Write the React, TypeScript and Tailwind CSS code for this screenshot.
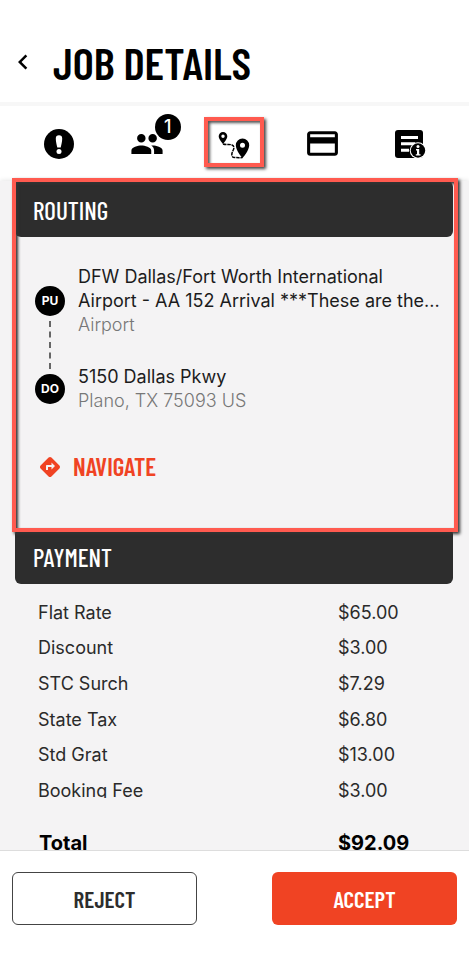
import type { ReactNode } from "react";
import { MdChevronLeft, MdCreditCard, MdDirections, MdPeople } from "react-icons/md";

const condensed =
  "font-['Barlow_Condensed','Roboto_Condensed','Liberation_Sans_Narrow','Liberation_Sans',sans-serif]";

const charges = [
  ["Flat Rate", "$65.00"],
  ["Discount", "$3.00"],
  ["STC Surch", "$7.29"],
  ["State Tax", "$6.80"],
  ["Std Grat", "$13.00"],
  ["Booking Fee", "$3.00"],
];

function AlertIcon() {
  return (
    <svg viewBox="0 0 30 30" className="size-[30px]" aria-hidden="true">
      <circle cx="15" cy="15" r="15" />
      <path d="M11.800 9.500a3.200 3.200 0 0 1 6.400 0c0 3-.8 6-1.500 9h-3.400c-.7-3-1.500-6-1.500-9z" fill="#fff" />
      <circle cx="15" cy="22.600" r="2.500" fill="#fff" />
    </svg>
  );
}

function RouteIcon() {
  return (
    <svg viewBox="0 0 32 28" className="h-7 w-8" aria-hidden="true">
      <path
        fillRule="evenodd"
        d="M5 0a4.300 4.300 0 0 0-4.300 4.300C.7 7.500 5 12 5 12s4.300-4.500 4.300-7.700A4.300 4.300 0 0 0 5 0zm0 2.600a1.700 1.700 0 1 1 0 3.400 1.700 1.700 0 0 1 0-3.400z"
      />
      <path
        fillRule="evenodd"
        d="M24.500 6.500A6.700 6.700 0 0 0 17.800 13.200C17.800 18.500 24.500 26 24.500 26s6.700-7.500 6.700-12.800A6.700 6.700 0 0 0 24.500 6.500zm0 4.200a2.500 2.500 0 1 1 0 5 2.500 2.500 0 0 1 0-5z"
      />
      <path
        d="M5 12c3 1 6 0 8.500.8 3.500 1.200 2.500 4 1.300 6.200-1.500 3-1.600 6.500 2 6.500 2.700.2 5 .3 7.700 0"
        fill="none"
        stroke="#000"
        strokeWidth="1.500"
        strokeDasharray="3.500 .8"
      />
    </svg>
  );
}

function NotesIcon() {
  return (
    <svg viewBox="0 0 32 30" className="h-[30px] w-8" aria-hidden="true">
      <rect x="1" y="1" width="28" height="28" rx="3" />
      <path d="M7 8.500h17M7 14.800h14M7 21.300h8" stroke="#fff" strokeWidth="3" />
      <circle cx="24" cy="21.500" r="8.300" fill="#fff" />
      <circle cx="24" cy="21.500" r="7.200" />
      <circle cx="24" cy="17.500" r="1.500" fill="#fff" />
      <path d="M22 20h3.200v5.200h1.300v1.400h-4.700v-1.400h1.200v-3.800h-1z" fill="#fff" />
    </svg>
  );
}

function Tab({ label, children }: { label: string; children: ReactNode }) {
  return (
    <button type="button" aria-label={label} className="flex items-center justify-center">
      {children}
    </button>
  );
}

function SectionTitle({ children }: { children: ReactNode }) {
  return (
    <h2
      className={`${condensed} flex h-14 items-center rounded-md bg-[#2d2d2d] px-[18px] pt-1 text-[25px] font-medium text-white`}
    >
      {children}
    </h2>
  );
}

function Stop({ code, children }: { code: string; children: ReactNode }) {
  return (
    <li className="flex items-center gap-[13px]">
      <span className="z-10 flex size-[30px] shrink-0 items-center justify-center rounded-full bg-black text-xs font-bold text-white">
        {code}
      </span>
      <div className="min-w-0 flex-1 text-lg leading-6 text-[#1c1c1c]">{children}</div>
    </li>
  );
}

export default function App() {
  return (
    <div className="flex h-screen flex-col overflow-hidden bg-white font-['Inter',sans-serif] text-black">
      <header className="flex h-[106px] shrink-0 items-center border-b-4 border-[#f7f7f7] px-2 pt-[22px]">
        <button type="button" aria-label="Back">
          <MdChevronLeft className="size-[30px]" />
        </button>
        <h1 className={`${condensed} ml-[15px] text-[45px] leading-none font-semibold`}>
          JOB DETAILS
        </h1>
      </header>

      <nav className="grid h-[75px] shrink-0 grid-cols-5 px-[15px]">
        <Tab label="Alerts">
          <AlertIcon />
        </Tab>
        <Tab label="Passengers">
          <span className="relative">
            <MdPeople className="size-[34px]" />
            <span className="absolute -top-[13px] -right-[17px] flex size-[26px] items-center justify-center rounded-full bg-black text-lg font-medium text-white">
              1
            </span>
          </span>
        </Tab>
        <Tab label="Routing">
          <span className="mb-1 flex h-[50px] w-[60px] items-center justify-center border-4 border-[#ff5a4f] pt-2 shadow-[2px_2px_3px_#444,inset_2px_2px_3px_#555]">
            <RouteIcon />
          </span>
        </Tab>
        <Tab label="Payment">
          <MdCreditCard className="size-[37px]" />
        </Tab>
        <Tab label="Notes">
          <NotesIcon />
        </Tab>
      </nav>

      <main className="min-h-0 flex-1 bg-[#f4f3f4] pr-4 pl-[15px] shadow-[0_0_5px_#ddd]">
        <section className="relative h-[347px]">
          <SectionTitle>ROUTING</SectionTitle>
          <div className="pt-7 pr-2 pl-5">
            <div className="relative">
              <div className="absolute top-14 left-[14px] h-12 border-l-2 border-dashed border-[#666]" />
              <ol className="flex flex-col gap-7">
                <Stop code="PU">
                  <p>
                    DFW Dallas/Fort Worth International
                    <br />
                    Airport - AA 152 Arrival ***These are the...
                  </p>
                  <p className="font-light text-[#777]">Airport</p>
                </Stop>
                <Stop code="DO">
                  <p>5150 Dallas Pkwy</p>
                  <p className="font-light text-[#777]">Plano, TX 75093 US</p>
                </Stop>
              </ol>
            </div>
            <a
              href="#navigate"
              className={`${condensed} mt-[35px] ml-[3px] flex items-center gap-[11px] text-[25px] font-semibold text-[#f04323]`}
            >
              <MdDirections className="size-6" />
              NAVIGATE
            </a>
          </div>
          <div className="pointer-events-none absolute -top-[3px] -right-[5px] -bottom-1 -left-[3px] z-10 border-4 border-[#ff5a4f] shadow-[2px_2px_3px_#333,inset_2px_2px_3px_#333]" />
        </section>

        <section>
          <SectionTitle>PAYMENT</SectionTitle>
          <div className="mt-[11px] h-[203px] overflow-hidden">
            <table className="h-[214px] w-full text-lg text-[#2a2a2a]">
              <tbody>
                {charges.map(([name, amount]) => (
                  <tr key={name}>
                    <th scope="row" className="p-0 pl-[23px] text-left font-normal">
                      {name}
                    </th>
                    <td className="w-[115px] p-0">{amount}</td>
                  </tr>
                ))}
              </tbody>
            </table>
          </div>
          <div className="mt-[31px] flex justify-between pl-6 text-xl font-bold">
            <span>Total</span>
            <span className="w-[115px]">$92.09</span>
          </div>
        </section>
      </main>

      <footer
        className={`${condensed} z-10 flex h-[113px] shrink-0 items-start justify-between border-t border-[#ddd] bg-white px-3 pt-[21px] text-[23px] font-semibold`}
      >
        <button
          type="button"
          className="h-[53px] w-[185px] rounded-md border border-[#444] pt-0.5 text-[#2d2d2d]"
        >
          REJECT
        </button>
        <button
          type="button"
          className="h-[53px] w-[185px] rounded-md bg-[#f04323] pt-0.5 text-white"
        >
          ACCEPT
        </button>
      </footer>
    </div>
  );
}
